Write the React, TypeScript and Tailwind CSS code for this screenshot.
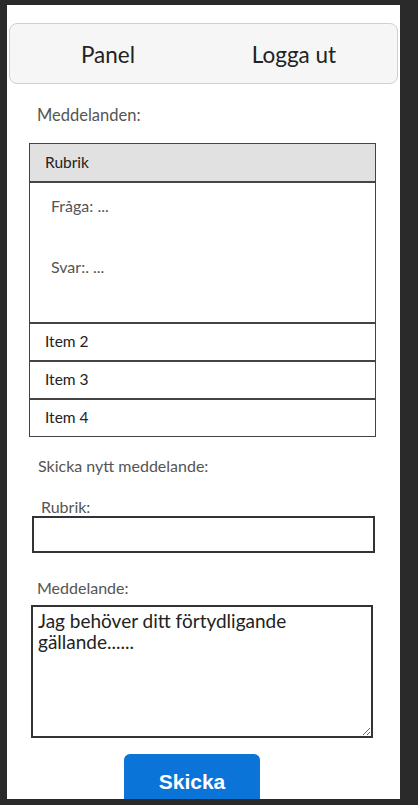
const items = ['Item 2', 'Item 3', 'Item 4']

export default function App() {
  return (
    <div className="h-[805px] w-[418px] overflow-hidden bg-[#2a2a2a] pl-[7px] pt-[5px] font-['Lato','Liberation_Sans',sans-serif]">
      <div className="h-[794px] w-[393px] overflow-hidden bg-white">
        <nav className="mx-[2px] mt-[18px] flex h-[61px] items-center rounded-[8px] border border-[#d0d0d0] bg-[#f6f6f6] pt-[2px] text-[22.5px] text-[#222]">
          <span className="w-[196px] text-center">Panel</span>
          <span className="w-[176px] text-center">Logga ut</span>
        </nav>

        <p className="ml-[30px] mt-[21px] text-[16.5px] leading-[20px] text-[#555]">Meddelanden:</p>

        <div className="ml-[22px] mt-[18px] w-[347px] border border-[#444]">
          <div className="flex h-[39px] items-center border-b-2 border-[#444] bg-[#e1e1e1] pl-[15px] text-[15.5px] text-[#222]">
            Rubrik
          </div>
          <div className="h-[139px] pl-[21px] pt-[13px] text-[16px] leading-[20px] text-[#555]">
            <p>Fråga: ...</p>
            <p className="mt-[41px]">Svar:. ...</p>
          </div>
          {items.map((item) => (
            <div
              key={item}
              className="flex h-[38px] items-center border-t-2 border-[#444] pl-[15px] text-[15.5px] text-[#222]"
            >
              {item}
            </div>
          ))}
        </div>

        <p className="ml-[31px] mt-[19px] text-[16px] leading-[20px] text-[#555]">Skicka nytt meddelande:</p>
        <p className="ml-[34px] mt-[21px] text-[16px] leading-[20px] text-[#555]">Rubrik:</p>
        <input className="ml-[25px] mt-[-1px] block h-[37px] w-[343px] border-2 border-[#333] px-2 outline-none" />

        <p className="ml-[30px] mt-[25px] text-[16px] leading-[20px] text-[#555]">Meddelande:</p>
        <textarea
          defaultValue="Jag behöver ditt förtydligande gällande......"
          className="ml-[24px] mt-[7px] block h-[133px] w-[342px] border-2 border-[#333] px-[5px] pt-[3px] text-[19px] leading-[21px] text-[#222] outline-none"
        />

        <button className="ml-[117px] mt-[16px] flex h-[56px] w-[136px] items-center justify-center rounded-t-[6px] bg-[#0a74d8] font-['Liberation_Sans',sans-serif] text-[21px] font-bold text-white">
          Skicka
        </button>
      </div>
    </div>
  )
}
